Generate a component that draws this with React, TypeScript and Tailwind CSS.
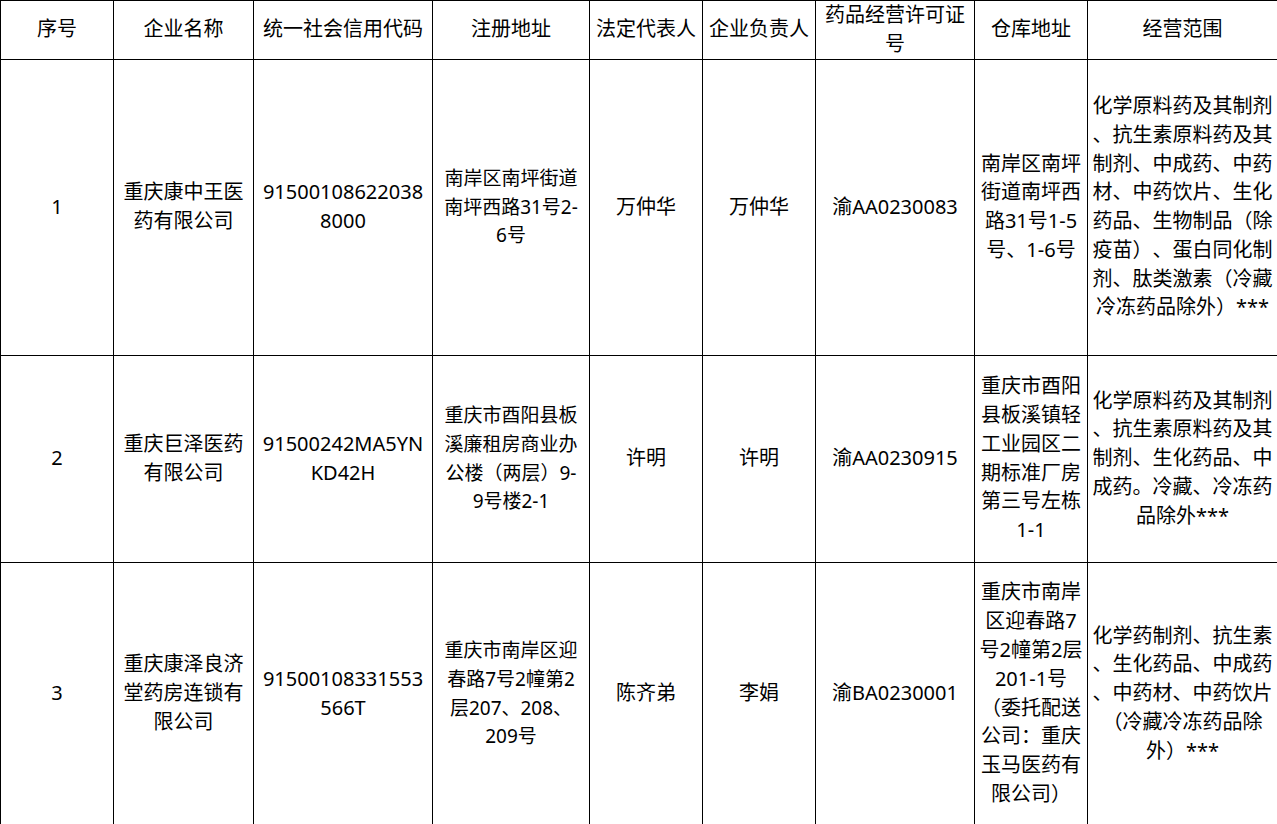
import React from "react";

type Row = {
  no: string;
  name: string[];
  code: string[];
  addr: string[];
  legal: string;
  head: string;
  license: string;
  store: string[];
  scope: string[];
  h: string;
};

const rows: Row[] = [
  {
    no: "1",
    name: ["重庆康中王医", "药有限公司"],
    code: ["91500108622038", "8000"],
    addr: ["南岸区南坪街道", "南坪西路31号2-", "6号"],
    legal: "万仲华",
    head: "万仲华",
    license: "渝AA0230083",
    store: ["南岸区南坪", "街道南坪西", "路31号1-5", "号、1-6号"],
    scope: [
      "化学原料药及其制剂",
      "、抗生素原料药及其",
      "制剂、中成药、中药",
      "材、中药饮片、生化",
      "药品、生物制品（除",
      "疫苗）、蛋白同化制",
      "剂、肽类激素（冷藏",
      "冷冻药品除外）***",
    ],
    h: "h-[296px]",
  },
  {
    no: "2",
    name: ["重庆巨泽医药", "有限公司"],
    code: ["91500242MA5YN", "KD42H"],
    addr: ["重庆市酉阳县板", "溪廉租房商业办", "公楼（两层）9-", "9号楼2-1"],
    legal: "许明",
    head: "许明",
    license: "渝AA0230915",
    store: ["重庆市酉阳", "县板溪镇轻", "工业园区二", "期标准厂房", "第三号左栋", "1-1"],
    scope: [
      "化学原料药及其制剂",
      "、抗生素原料药及其",
      "制剂、生化药品、中",
      "成药。冷藏、冷冻药",
      "品除外***",
    ],
    h: "h-[207px]",
  },
  {
    no: "3",
    name: ["重庆康泽良济", "堂药房连锁有", "限公司"],
    code: ["91500108331553", "566T"],
    addr: ["重庆市南岸区迎", "春路7号2幢第2", "层207、208、", "209号"],
    legal: "陈齐弟",
    head: "李娟",
    license: "渝BA0230001",
    store: [
      "重庆市南岸",
      "区迎春路7",
      "号2幢第2层",
      "201-1号",
      "（委托配送",
      "公司：重庆",
      "玉马医药有",
      "限公司）",
    ],
    scope: [
      "化学药制剂、抗生素",
      "、生化药品、中成药",
      "、中药材、中药饮片",
      "（冷藏冷冻药品除",
      "外）***",
    ],
    h: "h-[263px]",
  },
];

const headers: string[][] = [
  ["序号"],
  ["企业名称"],
  ["统一社会信用代码"],
  ["注册地址"],
  ["法定代表人"],
  ["企业负责人"],
  ["药品经营许可证", "号"],
  ["仓库地址"],
  ["经营范围"],
];

const widths = [113, 140, 179, 157, 113, 113, 159, 113, 190];

function Lines({ lines }: { lines: string[] }) {
  return (
    <>
      {lines.map((l, i) => (
        <div key={i} className="whitespace-nowrap">
          {l}
        </div>
      ))}
    </>
  );
}

const cell = "border border-black p-0 text-center align-middle";

export default function App() {
  return (
    <div className="bg-white w-[1277px] h-[824px] overflow-hidden text-black font-['Noto_Sans','Noto_Sans_CJK_SC',sans-serif] text-[20px] leading-[28.8px] [text-spacing-trim:space-all]">
      <table className="table-fixed border-collapse w-[1277px]">
        <colgroup>
          {widths.map((w, i) => (
            <col key={i} style={{ width: w }} />
          ))}
        </colgroup>
        <thead>
          <tr className="h-[57px]">
            {headers.map((h, i) => (
              <th key={i} className={`${cell} font-normal`}>
                <Lines lines={h} />
              </th>
            ))}
          </tr>
        </thead>
        <tbody>
          {rows.map((r) => (
            <tr key={r.no} className={r.h}>
              <td className={cell}>{r.no}</td>
              <td className={cell}>
                <Lines lines={r.name} />
              </td>
              <td className={cell}>
                <Lines lines={r.code} />
              </td>
              <td className={`${cell} text-[19px]`}>
                <Lines lines={r.addr} />
              </td>
              <td className={cell}>{r.legal}</td>
              <td className={cell}>{r.head}</td>
              <td className={cell}>{r.license}</td>
              <td className={cell}>
                <Lines lines={r.store} />
              </td>
              <td className={cell}>
                <Lines lines={r.scope} />
              </td>
            </tr>
          ))}
        </tbody>
      </table>
    </div>
  );
}
